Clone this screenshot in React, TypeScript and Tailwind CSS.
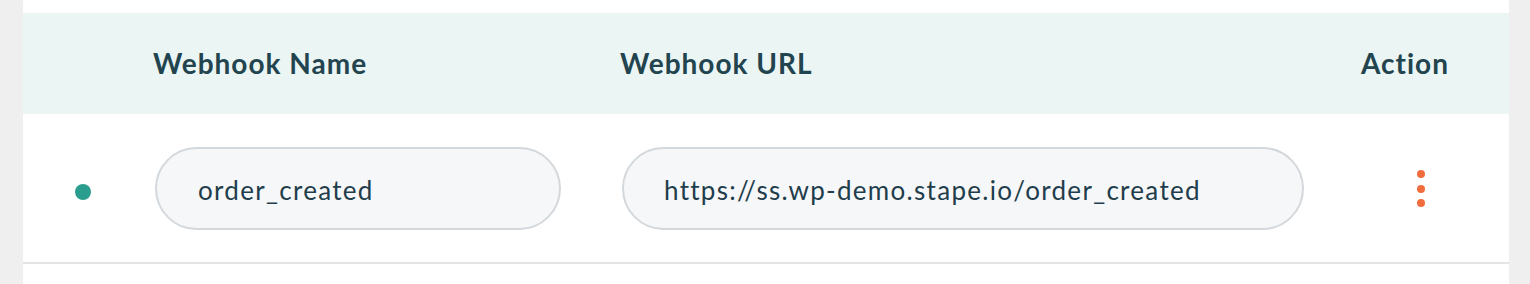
import React from "react";

const font = { fontFamily: "Lato, 'Noto Sans', sans-serif" };

function Dots() {
  return (
    <div className="flex flex-col items-center gap-[6.5px]">
      <span className="block h-[8px] w-[8px] rounded-full bg-[#f26d3d]" />
      <span className="block h-[8px] w-[8px] rounded-full bg-[#f26d3d]" />
      <span className="block h-[8px] w-[8px] rounded-full bg-[#f26d3d]" />
    </div>
  );
}

export default function App() {
  return (
    <div className="h-[284px] w-full bg-[#efefef] pl-[23px] pr-[21px]" style={font}>
      <div className="h-full bg-white pt-[13px]">
        <div className="flex h-[101px] items-center bg-[#ebf5f3] pb-[1px] text-[28px] font-bold tracking-[1px] text-[#22444f]">
          <div className="w-[130px]" />
          <div className="w-[467px]">Webhook Name</div>
          <div className="w-[682px]">Webhook URL</div>
          <div className="ml-auto pr-[60px]">Action</div>
        </div>
        <div className="flex h-[150px] items-center border-b-2 border-[#e4e4e4] pt-[1px] text-[26px] tracking-[1.3px] text-[#1f3d4b]">
          <div className="w-[130px] pl-[52px] pt-[6px]">
            <span className="block h-[16px] w-[16px] rounded-full bg-[#2a9d8f]" />
          </div>
          <div className="w-[467px] pl-[2px]">
            <div className="flex h-[83px] w-[406px] items-center rounded-full border-2 border-[#d3d8dc] bg-[#f6f7f9] pl-[41px] pt-[3px]">
              order_created
            </div>
          </div>
          <div className="w-[682px] pl-[2px]">
            <div className="flex h-[83px] w-[682px] items-center rounded-full border-2 border-[#d3d8dc] bg-[#f6f7f9] pl-[40px] pt-[3px]">
              https://ss.wp-demo.stape.io/order_created
            </div>
          </div>
          <div className="ml-auto pr-[84px]">
            <Dots />
          </div>
        </div>
      </div>
    </div>
  );
}
